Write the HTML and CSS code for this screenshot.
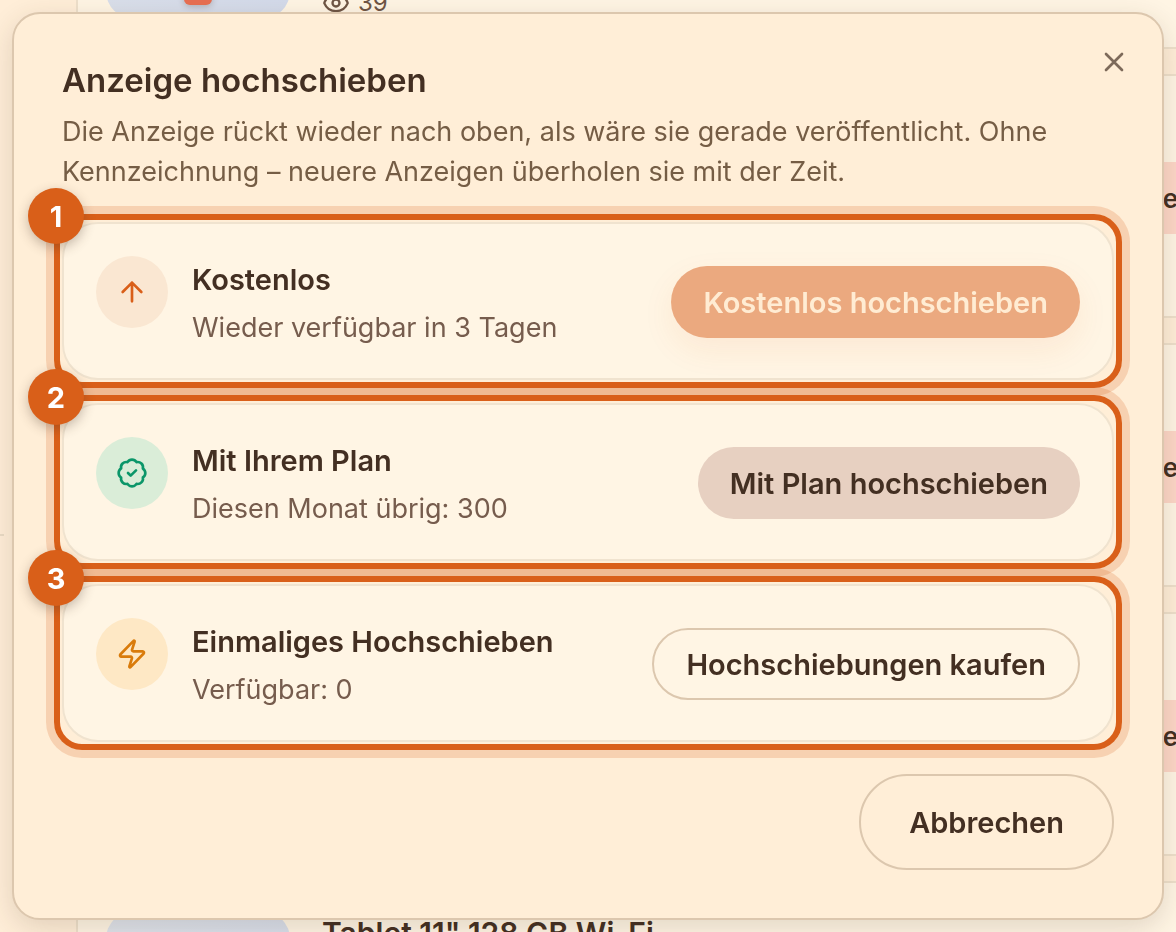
FILE: index.html
```html
<!DOCTYPE html>
<html lang="de">
  <head>
    <meta charset="UTF-8" />
    <meta name="viewport" content="width=device-width, initial-scale=1.0" />
    <title>Anzeige hochschieben</title>
    <link rel="stylesheet" href="styles.css">
  </head>
  <body>
    <div class="page">
      <aside class="sidebar"></aside>
      <main class="listings">
        <article class="listing">
          <div class="thumb"><span class="thumb-tag"></span></div>
          <div class="listing-info">
            <p class="views">
              <svg viewBox="0 0 24 24" class="icon-eye"><path d="M2.06 12.35a1 1 0 0 1 0-.7 10.75 10.75 0 0 1 19.88 0 1 1 0 0 1 0 .7 10.75 10.75 0 0 1-19.88 0" /><circle cx="12" cy="12" r="3" /></svg>
              39
            </p>
          </div>
        </article>
        <article class="listing"><button class="listing-action" type="button">e</button></article>
        <article class="listing"><button class="listing-action" type="button">e</button></article>
        <article class="listing"><button class="listing-action" type="button">e</button></article>
        <article class="listing">
          <div class="thumb"></div>
          <div class="listing-info">
            <h3>Tablet 11" 128 GB Wi-Fi</h3>
          </div>
        </article>
      </main>
    </div>

    <div class="overlay">
      <div class="dialog" role="dialog" aria-labelledby="dialog-title">
        <button class="close" type="button" aria-label="Schließen">
          <svg viewBox="0 0 24 24"><path d="M18 6 6 18M6 6l12 12" /></svg>
        </button>
        <h2 id="dialog-title">Anzeige hochschieben</h2>
        <p class="description">
          Die Anzeige rückt wieder nach oben, als wäre sie gerade veröffentlicht. Ohne Kennzeichnung – neuere Anzeigen
          überholen sie mit der Zeit.
        </p>

        <div class="options">
          <section class="option">
            <span class="step">1</span>
            <div class="option-icon free">
              <svg viewBox="0 0 24 24"><path d="m5 12 7-7 7 7M12 19V5" /></svg>
            </div>
            <div class="option-text">
              <h3>Kostenlos</h3>
              <p>Wieder verfügbar in 3 Tagen</p>
            </div>
            <button class="btn primary" type="button" disabled>Kostenlos hochschieben</button>
          </section>

          <section class="option">
            <span class="step">2</span>
            <div class="option-icon plan">
              <svg viewBox="0 0 24 24"><path d="M3.85 8.62a4 4 0 0 1 4.78-4.77 4 4 0 0 1 6.74 0 4 4 0 0 1 4.78 4.78 4 4 0 0 1 0 6.74 4 4 0 0 1-4.77 4.78 4 4 0 0 1-6.75 0 4 4 0 0 1-4.78-4.77 4 4 0 0 1 0-6.76Z" /><path d="m9 12 2 2 4-4" /></svg>
            </div>
            <div class="option-text">
              <h3>Mit Ihrem Plan</h3>
              <p>Diesen Monat übrig: 300</p>
            </div>
            <button class="btn secondary" type="button">Mit Plan hochschieben</button>
          </section>

          <section class="option">
            <span class="step">3</span>
            <div class="option-icon single">
              <svg viewBox="0 0 24 24"><path d="M4 14a1 1 0 0 1-.78-1.63l9.9-10.2a.5.5 0 0 1 .86.46l-1.92 6.02A1 1 0 0 0 13 10h7a1 1 0 0 1 .78 1.63l-9.9 10.2a.5.5 0 0 1-.86-.46l1.92-6.02A1 1 0 0 0 11 14z" /></svg>
            </div>
            <div class="option-text">
              <h3>Einmaliges Hochschieben</h3>
              <p>Verfügbar: 0</p>
            </div>
            <button class="btn outline" type="button">Hochschiebungen kaufen</button>
          </section>
        </div>

        <div class="dialog-footer">
          <button class="btn outline large" type="button">Abbrechen</button>
        </div>
      </div>
    </div>
  </body>
</html>
```
FILE: styles.css
```css
* {
  box-sizing: border-box;
}
body {
  font-family: Inter, sans-serif;
  margin: 0;
  height: 100vh;
  overflow: hidden;
  background-color: #ffeed8;
  color: #432f22;
}
h2,
h3,
p {
  margin: 0;
}
button {
  font: inherit;
  color: inherit;
}
svg {
  fill: none;
  stroke: currentColor;
  stroke-width: 2;
  stroke-linecap: round;
  stroke-linejoin: round;
}

/* listings behind the dialog */
.page {
  display: flex;
  height: 100vh;
  overflow: hidden;
}
.sidebar {
  width: 4px;
  height: 536px;
  margin-right: 72px;
  flex: none;
  border-bottom: 2px solid #eadbc5;
}
.listings {
  flex: 1;
  display: flex;
  flex-direction: column;
  gap: 25px;
  margin-top: -195px;
  margin-right: -72px;
}
.listing {
  display: flex;
  align-items: flex-start;
  flex: none;
  height: 244px;
  padding: 28px;
  border: 2px solid #eee0cb;
  background-color: #fff5e4;
}
.thumb {
  display: flex;
  align-items: flex-end;
  justify-content: center;
  width: 184px;
  height: 184px;
  padding-bottom: 14px;
  border-radius: 28px;
  background: linear-gradient(135deg, #dfe3ea, #d3daea);
}
.thumb-tag {
  width: 28px;
  height: 28px;
  border-radius: 6px;
  background-color: #e86f52;
  box-shadow: 0 2px 6px rgba(67, 47, 34, 0.25);
}
.listing-info {
  margin-left: 32px;
}
.listing-info h3 {
  font-size: 30px;
  font-weight: 600;
  line-height: 44px;
}
.views {
  display: flex;
  align-items: center;
  gap: 8px;
  margin-top: 152px;
  font-size: 24px;
  line-height: 32px;
  color: #6f5645;
}
.icon-eye {
  width: 28px;
  height: 28px;
}
.listing-action {
  height: 72px;
  margin: 58px 0 0 auto;
  padding: 0 40px 0 56px;
  border: none;
  border-radius: 36px;
  background-color: #fdd7c7;
  font-size: 26px;
  font-weight: 600;
}

/* dialog */
.overlay {
  position: fixed;
  inset: 0;
  display: flex;
  align-items: center;
  justify-content: center;
  padding: 12px;
}
.dialog {
  position: relative;
  width: 100%;
  padding: 48px;
  border: 2px solid #dcc7ae;
  border-radius: 28px;
  background-color: #ffeed7;
  box-shadow: 0 8px 28px rgba(67, 47, 34, 0.16);
}
.dialog h2 {
  font-size: 33px;
  font-weight: 600;
  line-height: 36px;
}
.close {
  position: absolute;
  top: 32px;
  right: 32px;
  display: flex;
  padding: 0;
  border: none;
  background: none;
  color: #7d6a5a;
  cursor: pointer;
}
.close svg {
  width: 32px;
  height: 32px;
}
.description {
  margin-top: 14px;
  font-size: 27px;
  line-height: 40px;
  color: #755d45;
}
.options {
  display: flex;
  flex-direction: column;
  gap: 23px;
  margin-top: 30px;
}
.option {
  position: relative;
  display: flex;
  align-items: center;
  gap: 24px;
  padding: 32px 32px 30px;
  border: 2px solid #f0e3cf;
  border-radius: 36px;
  background-color: #fff5e4;
}
.option::before {
  content: "";
  position: absolute;
  inset: -10px;
  border: 6px solid #d95f19;
  border-radius: 28px;
  box-shadow: 0 0 0 8px rgba(217, 95, 25, 0.2);
  pointer-events: none;
}
.step {
  position: absolute;
  top: -36px;
  left: -36px;
  z-index: 1;
  width: 56px;
  height: 56px;
  border-radius: 50%;
  background-color: #d95f19;
  box-shadow: 0 4px 12px rgba(67, 47, 34, 0.3);
  color: #fff;
  font-size: 29px;
  font-weight: 700;
  line-height: 58px;
  text-align: center;
}
.option-icon {
  display: flex;
  align-items: center;
  justify-content: center;
  align-self: flex-start;
  flex: none;
  width: 72px;
  height: 72px;
  border-radius: 50%;
}
.option-icon svg {
  width: 32px;
  height: 32px;
}
.free {
  background-color: #fae7d2;
  color: #d95f19;
}
.plan {
  background-color: #daedd8;
  color: #0b9669;
}
.single {
  background-color: #fee8c5;
  color: #d97b0b;
}
.option-text {
  flex: 1;
}
.option-text h3 {
  font-size: 29px;
  font-weight: 600;
  line-height: 48px;
}
.option-text p {
  margin-top: 4px;
  font-size: 27px;
  line-height: 40px;
  color: #765c4d;
}
.btn {
  height: 72px;
  padding: 0 32px;
  border: none;
  border-radius: 48px;
  font-size: 29px;
  font-weight: 600;
  white-space: nowrap;
  cursor: pointer;
}
.primary {
  background-color: #eba97f;
  box-shadow: 0 12px 32px rgba(217, 95, 25, 0.08);
  color: #ffecd3;
}
.secondary {
  background-color: #e7d0c1;
}
.outline {
  border: 2px solid #dcc7ae;
  background-color: transparent;
}
.large {
  height: 96px;
  padding: 0 48px;
}
.dialog-footer {
  display: flex;
  justify-content: flex-end;
  margin-top: 32px;
}
```
